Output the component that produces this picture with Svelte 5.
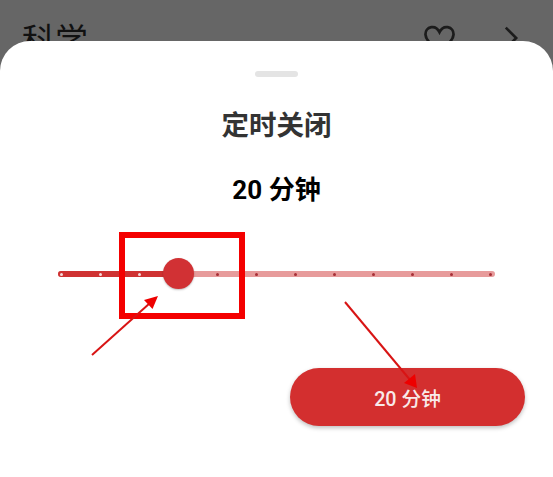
<script>
    let minutes = 20
    // the slider has 12 stops and the thumb sits on the fourth one
    const stops = 12
    const current = 3
    const ticks = Array.from({ length: stops }, (_, i) => i)
    const perTick = 39.05
    const firstTick = 3.5
    let thumbCenter = firstTick + current * perTick
</script>

<div class="page">
    <header class="topbar">
        <span class="topbar-title">科学</span>
        <svg class="heart" width="33" height="29" viewBox="0 0 34 30" fill="none" stroke="#1c1c1c" stroke-width="2.8">
            <path d="M17 8.500C15 4.500 11.500 2.800 8.500 3.300C4.500 4 2.300 7.200 2.500 11C2.800 17 10 23 17 28C24 23 31.200 17 31.500 11C31.700 7.200 29.500 4 25.500 3.300C22.500 2.800 19 4.500 17 8.500Z"/>
        </svg>
        <svg class="chevron" width="16" height="26" viewBox="0 0 18 30" fill="none" stroke="#1c1c1c" stroke-width="3">
            <path d="M3 3L15 15L3 27"/>
        </svg>
    </header>

    <section class="sheet">
        <div class="handle"></div>
        <h2 class="title">定时关闭</h2>
        <div class="value">{minutes} 分钟</div>

        <div class="slider">
            <div class="track">
                <div class="track-done" style="width: {thumbCenter}px"></div>
                <div class="ticks">
                    {#each ticks as t}
                        <span class="tick" class:passed={t <= current}></span>
                    {/each}
                </div>
            </div>
            <div class="thumb" style="left: {thumbCenter - 15.5}px"></div>
        </div>

        <div class="actions">
            <button class="confirm">{minutes} 分钟</button>
        </div>
    </section>

    <!-- red annotations drawn on top of the screenshot -->
    <svg class="marks" width="553" height="477" viewBox="0 0 553 477">
        <rect x="122" y="235" width="120" height="81" fill="none" stroke="#f40000" stroke-width="6"/>
        <line x1="92" y1="355" x2="150" y2="303" stroke="#d81414" stroke-width="2"/>
        <polygon points="158,296 152.500,309 144,300" fill="#ee0000"/>
        <line x1="345" y1="302" x2="411" y2="381" stroke="#d81414" stroke-width="2"/>
        <polygon points="417,388 404,383 415,374" fill="#ee0000"/>
    </svg>
</div>

<style>
    :global(body) {
        margin: 0;
        background: #fff;
    }

    .page {
        position: relative;
        width: 553px;
        height: 477px;
        overflow: hidden;
        background: #666666;
        font-family: Roboto, "Noto Sans CJK SC", sans-serif;
    }

    .topbar {
        display: flex;
        align-items: flex-start;
        height: 41px;
        padding: 22px 34px 0 22px;
        box-sizing: border-box;
        overflow: hidden;
    }

    .topbar-title {
        font-size: 33px;
        line-height: 38px;
        color: #111;
        flex: 1;
    }

    .heart {
        margin-right: 47px;
        margin-top: 2px;
    }

    .chevron {
        margin-top: 3px;
    }

    .sheet {
        display: flex;
        flex-direction: column;
        align-items: center;
        height: 436px;
        background: #fff;
        border-radius: 30px 30px 0 0;
    }

    .handle {
        width: 43px;
        height: 6px;
        margin-top: 30px;
        border-radius: 3px;
        background: #e4e4e4;
    }

    .title {
        margin: 31px 0 0;
        font-size: 27.500px;
        line-height: 36px;
        font-weight: 700;
        color: #333;
    }

    .value {
        margin-top: 28px;
        font-size: 26px;
        line-height: 36px;
        font-weight: 700;
        color: #000;
    }

    .slider {
        position: relative;
        align-self: flex-start;
        width: 437px;
        height: 6px;
        margin: 63px 0 0 58px;
    }

    .track {
        position: relative;
        height: 6px;
        border-radius: 3px;
        background: #e79b9b;
    }

    .track-done {
        height: 6px;
        border-radius: 3px 0 0 3px;
        background: #cf3232;
    }

    .ticks {
        position: absolute;
        inset: 0 2.500px 0 2px;
        display: flex;
        justify-content: space-between;
        align-items: center;
    }

    .tick {
        width: 3px;
        height: 3px;
        border-radius: 50%;
        background: #a82f36;
    }

    .tick.passed {
        background: #f6dcdc;
    }

    .thumb {
        position: absolute;
        top: -13px;
        width: 31px;
        height: 31px;
        border-radius: 50%;
        background: #d13134;
        box-shadow: 0 1px 2px rgba(0, 0, 0, 0.25);
    }

    .actions {
        align-self: stretch;
        display: flex;
        justify-content: flex-end;
        padding: 0 28px;
        margin-top: 91px;
    }

    .confirm {
        width: 235px;
        height: 58px;
        border: none;
        border-radius: 29px;
        background: #d32f2f;
        color: #f8eaea;
        font-family: inherit;
        font-size: 19.700px;
        font-weight: 500;
        box-shadow: 0 2px 4px rgba(0, 0, 0, 0.25);
    }

    .marks {
        position: absolute;
        top: 0;
        left: 0;
        pointer-events: none;
    }
</style>
